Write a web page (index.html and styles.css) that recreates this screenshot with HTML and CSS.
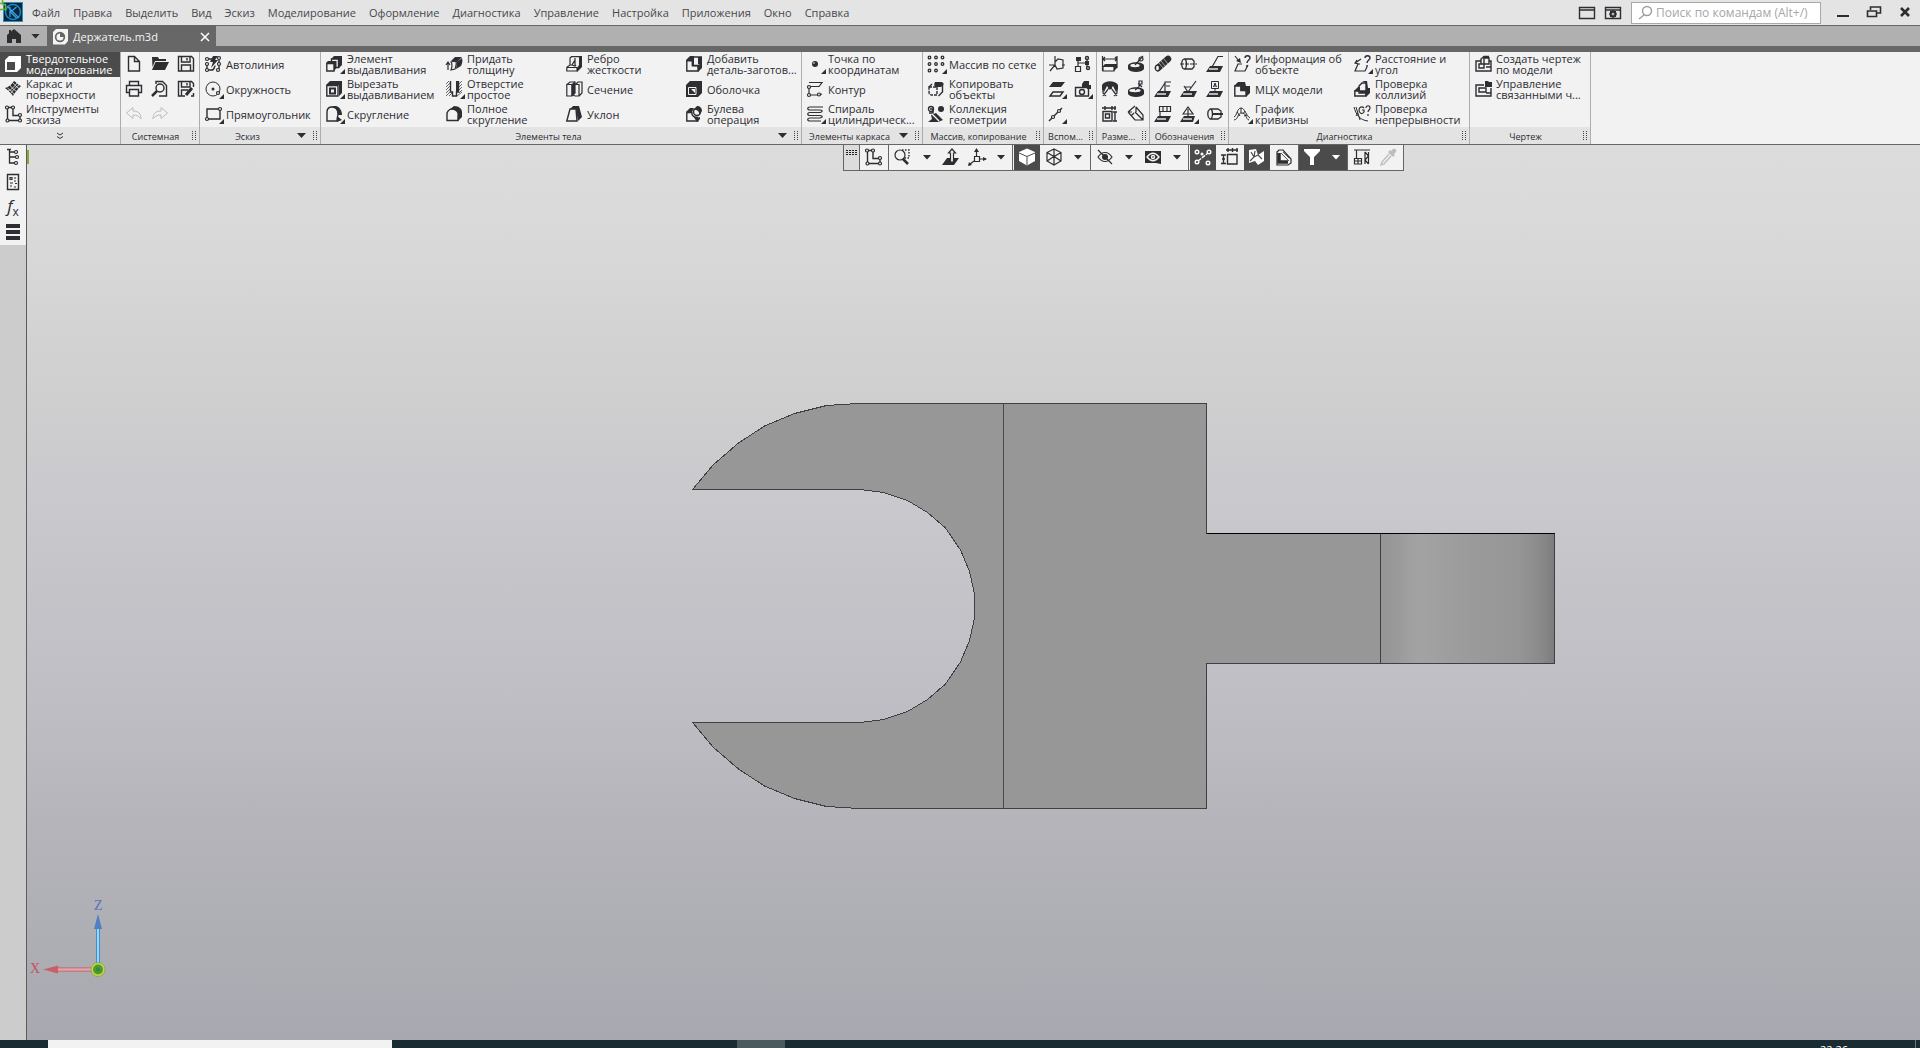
FILE: index.html
```html
<!DOCTYPE html>
<html lang="ru">
<head>
<meta charset="utf-8">
<title>Держатель.m3d</title>
<meta name="viewport" content="width=device-width, initial-scale=1">
<link rel="stylesheet" href="styles.css">
</head>
<body>
<header class="titlebar">
  <svg class="logo" viewBox="0 0 26 25" aria-hidden="true"><rect x="3.500" y="2.500" width="19" height="19" fill="#0a2540" stroke="#2497b8"/><circle cx="13" cy="12" r="7.500" fill="none" stroke="#1e86c4" stroke-width="1.500"/><path d="M10 7v10M16.500 7l-6 5 6 6M7 6l12 12" fill="none" stroke="#39a7dc" stroke-width="1.200"/><path d="M0 3.500h2.500V0M0 9.500h5.500V4.500H2.500" fill="none" stroke="#6fae2c" stroke-width="1.500"/></svg>
  <nav class="menu" aria-label="Главное меню">
    <button>Файл</button><button>Правка</button><button>Выделить</button><button>Вид</button><button>Эскиз</button><button>Моделирование</button><button>Оформление</button><button>Диагностика</button><button>Управление</button><button>Настройка</button><button>Приложения</button><button>Окно</button><button>Справка</button>
  </nav>
  <button class="win" aria-label="Окно"><svg class="icon" viewBox="0 0 20 20"><path d="M2.500 4.500h15v11h-15zM2 7h16"/></svg></button>
  <button class="win" aria-label="Параметры"><svg class="icon" viewBox="0 0 20 20"><path d="M2.500 4.500h15v11h-15zM2 7h16"/><circle cx="10" cy="11" r="2.500" stroke-width="2"/><path d="M10 7v8M6 11h8M7 8l6 6M13 8l-6 6" stroke-width="1"/><circle class="p" cx="10" cy="11" r="1"/></svg></button>
  <label class="search"><svg class="icon" viewBox="0 0 20 20"><circle cx="11" cy="8" r="4.500"/><path d="M8 12l-5 4"/></svg><input type="text" placeholder="Поиск по командам (Alt+/)" aria-label="Поиск по командам"></label>
  <div class="winctl">
    <button aria-label="Свернуть"><svg class="icon" viewBox="0 0 20 20"><path d="M4 14h12" stroke-width="2"/></svg></button>
    <button aria-label="Развернуть"><svg class="icon" viewBox="0 0 20 20"><path d="M3.500 9h9v5.500h-9zM3 9h10M6.500 8V5h10v6H13M6 5h11" stroke-width="1.600"/></svg></button>
    <button aria-label="Закрыть"><svg class="icon" viewBox="0 0 20 20"><path d="M6 6l8 8M14 6l-8 8" stroke-width="2.500"/></svg></button>
  </div>
</header>

<div class="tabs">
  <button class="home" aria-label="Начальная страница"><svg class="icon" viewBox="0 0 20 20"><path class="f" d="M10 3l7 6v8h-5v-4H8v4H3V9zM5 4h2v4H5z"/></svg><i class="caret"></i></button>
  <div class="tab"><svg class="icon" viewBox="0 0 20 20"><path class="f" d="M5 2h12v12l-3 3.500H2V5z"/><circle cx="9" cy="10" r="4.500" stroke="#676767" fill="#676767"/><path class="f" d="M9 6.500a3.500 3.500 0 1 0 3.500 3.500H9z"/></svg><span>Держатель.m3d</span><button aria-label="Закрыть вкладку"><svg viewBox="0 0 10 10"><path d="M1 1l8 8M9 1L1 9"/></svg></button></div>
</div>

<div class="ribbon">
  <section class="group">
    <div class="cmds">
      <button class="cmd on"><svg class="icon" viewBox="0 0 20 20"><path class="f" d="M1 6l4-4h12v12l-4 4H1z"/><path fill="#4b4b4b" stroke="none" d="M3 8h8v8H3z"/></svg><span>Твердотельное<br>моделирование</span></button>
      <button class="cmd"><svg class="icon" viewBox="0 0 20 20"><path class="f" d="M1 9c4-1 7-4 9-7 2 1 4 4 7 5-3 3-6 6-8 10-2-3-5-6-8-8z"/><path d="M4 12c3-1 6-4 9-8M7 14c2-3 5-6 8-8M6 6c1 3 5 5 7 7M3.500 9c2 2 6 4 7 7M9 4c2 2 4 5 7 6" stroke="#f2f2f2" stroke-width=".8"/></svg><span>Каркас и<br>поверхности</span></button>
      <button class="cmd"><svg class="icon" viewBox="0 0 20 20"><path d="M3.500 4v12.500H16V11.500H9V3.500H4"/><g class="n"><circle cx="3" cy="3.500" r="1.500"/><circle cx="9" cy="3.500" r="1.500"/><circle cx="16" cy="11" r="1.500"/><circle cx="16" cy="16.500" r="1.500"/><circle cx="3.500" cy="16.500" r="1.500"/></g></svg><span>Инструменты<br>эскиза</span></button>
    </div>
    <button class="foot more" aria-label="Ещё"><svg viewBox="0 0 8 8"><path d="M1 1l3 2 3-2M1 4.500l3 2 3-2"/></svg></button>
  </section>

  <section class="group">
    <div class="grid g3">
      <button aria-label="Создать"><svg class="icon" viewBox="0 0 20 20"><path d="M4.500 2.500h6l5 5v9.500h-11zM10.500 2.500v5h5"/></svg></button>
      <button aria-label="Открыть"><svg class="icon" viewBox="0 0 20 20"><path class="f" d="M2 3h6l1 2h7v2H5L2.500 13zM5.500 8H19l-4 8H2z"/></svg></button>
      <button aria-label="Сохранить"><svg class="icon" viewBox="0 0 20 20"><path d="M2.500 2.500h13l2 2v12.500h-15zM5.500 3v5h8.500V3M5.500 17v-6h9v6M11 4v2.500"/></svg></button>
      <button aria-label="Печать"><svg class="icon" viewBox="0 0 20 20"><path d="M5.500 6V2.500h9V6M5 13.500H2.500V6.500h15v7H15M5.500 10.500h9v6.500h-9zM5 10.500h10"/></svg></button>
      <button aria-label="Просмотр"><svg class="icon" viewBox="0 0 20 20"><path d="M6 5V2.500h6.500l4 4V17H9"/><circle cx="10" cy="9" r="4"/><path d="M7 12l-5 5" stroke-width="2.500"/></svg></button>
      <button aria-label="Сохранить как"><svg class="icon" viewBox="0 0 20 20"><path d="M9 17H2.500V2.500h13l2 2V8M5.500 3v5h8.500V3M5.500 17v-6h7M11 4v2.500M17.500 14v3H15"/><path d="M10 16l6-7" stroke-width="3"/></svg></button>
      <button disabled aria-label="Отменить"><svg class="icon thin" viewBox="0 0 20 20"><path d="M2.500 9L9 3.500v3.500c6 0 8 3 8 8-2-3-4-4-8-4v3.500z"/></svg></button>
      <button disabled aria-label="Повторить"><svg class="icon thin" viewBox="0 0 20 20"><path d="M17.500 9L11 3.500v3.500c-6 0-8 3-8 8 2-3 4-4 8-4v3.500z"/></svg></button>
    </div>
    <footer class="foot"><span>Системная</span><i class="grip"></i></footer>
  </section>

  <section class="group">
    <div class="cmds">
      <button class="cmd"><svg class="icon" viewBox="0 0 20 20"><path d="M3 15V9M3.500 16h4c4 0 2-4 4-4M4 5h4M15 4v12"/><path class="f" d="M9 2h5l-3 4h3l-7 8 2-6H6z"/><g class="n"><circle cx="3" cy="5" r="1.500"/><circle cx="3" cy="10" r="1.500"/><circle cx="3" cy="16" r="1.500"/><circle cx="15" cy="4" r="1.500"/><circle cx="15" cy="10" r="1.500"/><circle cx="14" cy="16" r="1.500"/></g></svg><span>Автолиния</span></button>
      <button class="cmd"><svg class="icon" viewBox="0 0 20 20"><circle cx="9" cy="10" r="7" stroke-width="1"/><circle class="f" cx="9" cy="10" r="1.500"/><circle class="n1" cx="14" cy="14" r="1.500"/><path class="f" d="M20 15v5h-5z"/></svg><span>Окружность</span></button>
      <button class="cmd"><svg class="icon" viewBox="0 0 20 20"><path d="M3 5h13v10H3z"/><g class="n"><circle cx="16" cy="5" r="1.500"/><circle cx="3" cy="15" r="1.500"/></g><path class="f" d="M20 15v5h-5z"/></svg><span>Прямоугольник</span></button>
    </div>
    <footer class="foot"><span>Эскиз</span><i class="caret"></i><i class="grip"></i></footer>
  </section>

  <section class="group">
    <div class="cmds">
      <button class="cmd"><svg class="icon" viewBox="0 0 20 20"><path d="M6.500 8V5h7v8.500H11M1.800 9.500H9V17H1.800z"/><path class="f" d="M6 5l3-3h8v9l-3 3V5z"/><path class="f" d="M1 9l2-2h8.500v7L9 17V9z"/><path class="f" d="M20 15v5h-5z"/></svg><span>Элемент<br>выдавливания</span></button>
      <button class="cmd"><svg class="icon" viewBox="0 0 20 20"><path class="f" d="M1 6l4-4h12v12l-3 3V6z"/><path d="M1.800 6.500H13V17H1.800z"/><path d="M5 9.500h5v5H5z" stroke-width="2"/><path class="f" d="M20 15v5h-5z"/></svg><span>Вырезать<br>выдавливанием</span></button>
      <button class="cmd"><svg class="icon" viewBox="0 0 20 20"><path d="M2 17V8c0-4 3-5 5-5 5 0 6 4 6 7 0 2-1 3-1 7z"/><path class="f" d="M6 2h5c4 1 6 5 6 9l-4 0c0-4-2-8-7-9zM12 12l5 4-5 2z"/><path class="f" d="M20 15v5h-5z"/></svg><span>Скругление</span></button>
      <button class="cmd"><svg class="icon" viewBox="0 0 20 20"><path d="M3 16V9M1 11l2-3 2 3M6 8l5-1c1 3 0 5-1 8l-4 1c1-3 2-5 0-8z" stroke-width="1.200"/><path class="f" d="M6 7l4-4h7l-5 5zM12 8l5-4c1 3 0 6-1 8l-5 3z"/></svg><span>Придать<br>толщину</span></button>
      <button class="cmd"><svg class="icon" viewBox="0 0 20 20"><path d="M5.500 2v11h2v4h4v-4h2V2"/><path d="M1 5l3-3M1 8l4-4M1 11l4-4M1 14l4-4M1 17l4-4M4 17l3-3M14 5l3-3M14 8l3-3M14 11l3-3M14 14l3-3M12 17l5-4" stroke-width=".7"/><path class="f" d="M11 2h3v11h-3z M20 15v5h-5z"/></svg><span>Отверстие<br>простое</span></button>
      <button class="cmd"><svg class="icon" viewBox="0 0 20 20"><path d="M2 16.500V9c1-3 4-5 8-4 3 1 4 4 3 7v4.500z"/><path class="f" d="M4 6l5-4c5 0 8 3 8 6v5l-4 4v-5c0-4-3-7-9-6z"/></svg><span>Полное<br>скругление</span></button>
      <button class="cmd"><svg class="icon" viewBox="0 0 20 20"><path d="M5 11V4l1.500-1.300H16v9.300l-3 2M1.800 13.500H12V17H1.800zM2 13l3-2h2M10 4v8M10 6l-3 5 3 1 1-1" stroke-width="1.200"/><path class="f" d="M14 2h3v11l-5 5v-4l2-3z"/></svg><span>Ребро<br>жесткости</span></button>
      <button class="cmd"><svg class="icon" viewBox="0 0 20 20"><path d="M1.800 5.500h5V17h-5zM7 17l3-3V3H5L2 5.500M10 5.500h4V17h-4l-2-1M11 5l2-2h4v11l-3 3" stroke-width="1.200"/><path class="f" d="M7 5l3-3v12l-3 3z"/></svg><span>Сечение</span></button>
      <button class="cmd"><svg class="icon" viewBox="0 0 20 20"><path d="M1.800 17L5 5h6l1 12z"/><path class="f" d="M5 5l3-3h6l3 11-4 4L11 5z"/></svg><span>Уклон</span></button>
      <button class="cmd"><svg class="icon" viewBox="0 0 20 20"><path d="M1.800 6.800h5.500v5H13V17H1.800z"/><path class="f" d="M1 6l4-4h4v10H7V7H1zM9 11h8v3l-4 4v-6H9z"/><path d="M9 3h7.300v8.500H9"/><path class="f" d="M13 3h4v9l-4-2z"/></svg><span>Добавить<br>деталь-заготов...</span></button>
      <button class="cmd"><svg class="icon" viewBox="0 0 20 20"><path class="f" d="M1 6l4-4h12v12l-4 4H1z"/><path d="M3.500 8.500h7.500v7H3.500z" stroke="#f2f2f2" stroke-width="1"/><path d="M6 10h4v4z" fill="#f2f2f2" stroke="none"/></svg><span>Оболочка</span></button>
      <button class="cmd"><svg class="icon" viewBox="0 0 20 20"><path d="M1.800 8.500h5c0 3 2 5 6 5V17h-11z"/><path class="f" d="M1 8l4-4h4l-2 4zM8 12l5 2 2-1v2l-3 3z"/><circle cx="12" cy="8" r="3.500"/><path class="f" d="M8 6l4-4c3 0 5 2 5 5l-3 4c1-3-2-6-6-5z"/></svg><span>Булева<br>операция</span></button>
    </div>
    <footer class="foot"><span>Элементы тела</span><i class="caret"></i><i class="grip"></i></footer>
  </section>

  <section class="group">
    <div class="cmds">
      <button class="cmd"><svg class="icon" viewBox="0 0 20 20"><circle class="f" cx="9" cy="10" r="3"/><circle cx="8" cy="9" r="1" fill="#aaa" stroke="none"/><path class="f" d="M20 15v5h-5z"/></svg><span>Точка по<br>координатам</span></button>
      <button class="cmd"><svg class="icon" viewBox="0 0 20 20"><path d="M3 3.500h13l-3 4H4L3 8v8h10l3-1" stroke-width="1.200"/><g class="n"><circle cx="3" cy="8" r="1.500"/><circle cx="3" cy="16" r="1.500"/><circle cx="13" cy="15.500" r="1.500"/></g></svg><span>Контур</span></button>
      <button class="cmd"><svg class="icon" viewBox="0 0 20 20"><path d="M17 3H4c-3 0-3 3 0 3h10c3 0 3 2 0 2.500H4c-3 0-3 3 0 3h10c3 0 3 2 0 2.500H4c-3 0-3 3 0 3h11" stroke-width="1.200"/><path class="f" d="M20 15v5h-5z"/></svg><span>Спираль<br>цилиндрическ...</span></button>
    </div>
    <footer class="foot"><span>Элементы каркаса</span><i class="caret"></i><i class="grip"></i></footer>
  </section>

  <section class="group">
    <div class="cmds">
      <button class="cmd"><svg class="icon" viewBox="0 0 20 20"><g stroke-width="1.300"><circle cx="2.500" cy="3.500" r="1.300"/><circle cx="9" cy="3.500" r="1.300"/><circle cx="15.500" cy="3.500" r="1.300"/><circle cx="2.500" cy="10" r="1.300"/><circle cx="9" cy="10" r="1.300"/><circle cx="15.500" cy="10" r="1.300"/><circle cx="2.500" cy="16.500" r="1.300"/><circle cx="9" cy="16.500" r="1.300"/></g><path class="f" d="M20 15v5h-5z"/></svg><span>Массив по сетке</span></button>
      <button class="cmd"><svg class="icon" viewBox="0 0 20 20"><path d="M2 8h8v8H5c-2 0-3-1-3-3z" stroke-dasharray="3 1"/><path d="M15.500 6v7l-4 4M5 5l-3 3"/><path class="f" d="M8 3h7l2 2-3 3H8c-1-2-1-3 0-5z"/></svg><span>Копировать<br>объекты</span></button>
      <button class="cmd"><svg class="icon" viewBox="0 0 20 20"><circle cx="4" cy="5" r="2.500"/><path d="M3 5h3v4H2"/><circle class="f" cx="14" cy="5" r="3"/><path class="f" d="M4 11l5-2 7 7-5 2H1l4-3z"/><path d="M5 10l7 7" stroke="#f2f2f2"/></svg><span>Коллекция<br>геометрии</span></button>
    </div>
    <footer class="foot"><span>Массив, копирование</span><i class="grip"></i></footer>
  </section>

  <section class="group">
    <div class="grid g2">
      <button aria-label="Система координат"><svg class="icon" viewBox="0 0 20 20"><path d="M8 2v9H2M8 11l-5 6M8 11l2 4 6-1V6l-5-1-3 3M15 11h3" stroke-width="1.200"/></svg></button>
      <button aria-label="Связи"><svg class="icon" viewBox="0 0 20 20"><path d="M2.500 12.500h5v5h-5zM5 12V6M5 9h9M14 5v8" stroke-width="1.200"/><path class="f" d="M3 3h5v4H3zM12 7h4v4h-4z"/><circle cx="14" cy="4" r="1.500"/><circle cx="15" cy="14" r="1.500"/></svg></button>
      <button aria-label="Плоскость"><svg class="icon" viewBox="0 0 20 20"><path class="f" d="M6 3h12l-4 5H2z"/><path d="M6 13h10l-3 4H3z"/><path class="f" d="M20 15v5h-5z"/></svg></button>
      <button aria-label="Объекты"><svg class="icon" viewBox="0 0 20 20"><path d="M2.500 8.500h13v8.500h-13z"/><circle cx="9" cy="13" r="2.500"/><path class="f" d="M11 2h5v4h2v4h-4V8h-5V5z"/><path class="f" d="M20 15v5h-5z"/></svg></button>
      <button aria-label="Ось"><svg class="icon" viewBox="0 0 20 20"><path d="M2 17L15 4"/><g class="n"><circle cx="6" cy="13" r="1.500"/><circle cx="12" cy="7" r="1.500"/></g><path class="f" d="M20 15v5h-5z"/></svg></button>
    </div>
    <footer class="foot"><span>Вспом...</span><i class="grip"></i></footer>
  </section>

  <section class="group">
    <div class="grid g2">
      <button aria-label="Размер"><svg class="icon" viewBox="0 0 20 20"><path d="M2.500 2v15M17 2v12M3 5h14M5 3L3 5l2 2M15 3l2 2-2 2M3 12.500h11V17H3z" stroke-width="1.200"/><path class="f" d="M3 12l2-2h12v4l-3 3v-5z"/></svg></button>
      <button aria-label="Диаметр"><svg class="icon" viewBox="0 0 20 20"><path class="f" d="M2 12c0-5 16-5 16 0v3c-2 4-14 4-16 0z"/><ellipse cx="9" cy="11.500" rx="4" ry="1" fill="#f2f2f2" stroke="#f2f2f2"/><path d="M9 11l8-9" stroke-width="1.200"/><circle cx="15" cy="5" r="2" stroke-width="1.200"/></svg></button>
      <button aria-label="Угол"><svg class="icon" viewBox="0 0 20 20"><path class="f" d="M2 6c3-5 13-5 16 0v4l-2 3-3-6-3 4-3-4-3 6-2-3z"/><path d="M3 17c3-5 6-6 7-11 1 5 4 6 7 11M3 8v6l3 3M17 8v6l-3 3" stroke-width="1.200"/></svg></button>
      <button aria-label="Радиус"><svg class="icon" viewBox="0 0 20 20"><path class="f" d="M2 12c0-5 16-5 16 0v3c-2 4-14 4-16 0z"/><ellipse cx="9" cy="11.500" rx="5" ry="1" fill="#f2f2f2" stroke="#f2f2f2"/><path d="M9 11l4-3M13 8V2h3v3h-3l3 3" stroke-width="1.200"/></svg></button>
      <button aria-label="Авторазмер"><svg class="icon" viewBox="0 0 20 20"><path d="M2 4h14M5 2v4M12 2v4M3 7.500h9V17H3zM5.500 10h4v4h-4zM13 8h4M13 17h4M15 8v9M15 2v4" stroke-width="1.400"/></svg></button>
      <button aria-label="Линейный"><svg class="icon" viewBox="0 0 20 20"><path d="M2 8l7 8h8v-5l-7-8M2 8l7-6M9 8l8 8M2 8h4M5 12l3-3M10 3v5" stroke-width="1.200"/></svg></button>
    </div>
    <footer class="foot"><span>Разме...</span><i class="grip"></i></footer>
  </section>

  <section class="group">
    <div class="grid g3">
      <button aria-label="Резьба"><svg class="icon" viewBox="0 0 20 20"><path d="M5 14L15 5" stroke-width="6.500" stroke-linecap="round"/><path d="M6 9l5 6M8 7l5 6M11 5l4 5" stroke="#f2f2f2" stroke-width=".6"/><ellipse cx="4.500" cy="14" rx="2" ry="2.800" fill="#f2f2f2" stroke-width="1.200"/></svg></button>
      <button aria-label="Обозначение"><svg class="icon" viewBox="0 0 20 20"><path d="M5 5h8l2 2v6l-2 2H5C2 14 2 6 5 5zM6 5c2 2 2 8 0 10" stroke-width="1.300"/><path d="M1 10h17" stroke-width="1" stroke-dasharray="4 1"/></svg></button>
      <button aria-label="Выноска"><svg class="icon" viewBox="0 0 20 20"><path d="M18 2.500h-5L7 13" stroke-width="1.200"/><path class="f" d="M5 12h13l-3 6H1z"/><path d="M4 15h9" stroke="#f2f2f2"/></svg></button>
      <button aria-label="Маркировка"><svg class="icon" viewBox="0 0 20 20"><path d="M18 3h-6v9M13 7h4M12 4L6 13" stroke-width="1.200"/><path class="f" d="M5 12h13l-3 6H1z"/><path d="M4 15h9" stroke="#f2f2f2"/></svg></button>
      <button aria-label="Шероховатость"><svg class="icon" viewBox="0 0 20 20"><path d="M5 7l4 6 8-11M6 8h6" stroke-width="1.200"/><path class="f" d="M5 12h13l-3 6H1z"/><path d="M4 15h9" stroke="#f2f2f2"/></svg></button>
      <button aria-label="База"><svg class="icon" viewBox="0 0 20 20"><path d="M6.500 2.500h7v7h-7zM10 9v4M8.500 8l1.500-4 1.500 4M9 7h2" stroke-width="1"/><path class="f" d="M5 12h13l-3 6H1z"/><path d="M4 15h9" stroke="#f2f2f2"/></svg></button>
      <button aria-label="Допуск"><svg class="icon" viewBox="0 0 20 20"><path d="M6.500 2.500h11v5h-11zM10 3v4M14 3v4M7 8v6" stroke-width="1.200"/><path class="f" d="M5 12h13l-3 6H1z"/><path d="M4 15h9" stroke="#f2f2f2"/></svg></button>
      <button aria-label="Клеймо"><svg class="icon" viewBox="0 0 20 20"><path d="M4 10l5-7 5 7zM9 5v8" stroke-width="1.200"/><path class="f" d="M5 12h11l-2 6H1z"/><path d="M4 15h9" stroke="#f2f2f2"/><path class="f" d="M20 15v5h-5z"/></svg></button>
      <button aria-label="Осевая линия"><svg class="icon" viewBox="0 0 20 20"><path d="M5 5h8l3 2v6l-3 2H5C2 13 2 7 5 5zM6 5c2 2 2 8 0 10" stroke-width="1.300"/><path d="M8 10h10" stroke-width="2"/></svg></button>
    </div>
    <footer class="foot"><span>Обозначения</span><i class="grip"></i></footer>
  </section>

  <section class="group">
    <div class="cmds">
      <button class="cmd"><svg class="icon" viewBox="0 0 20 20"><path d="M9 10H5l-3 7h10l3-6" stroke-width="1.200"/><path d="M2 2l4 5" stroke-width="1.200"/><path class="f" d="M8 9L3 7l4-3z"/><path d="M12 4c0-3 5-3 5 0 0 2-3 2-3 5M14 11v2"/></svg><span>Информация об<br>объекте</span></button>
      <button class="cmd"><svg class="icon" viewBox="0 0 20 20"><path d="M1.800 7h6v4.500H13V17H1.800z"/><path class="f" d="M1 7l4-4h7l1 4h4v7l-4 4v-7H8V7z"/></svg><span>МЦХ модели</span></button>
      <button class="cmd"><svg class="icon" viewBox="0 0 20 20"><path d="M1 16c5-1 3-7 8-7s3 6 7 7M1 13C4 12 4 4 8 4s5 8 9 10M4 8l3 4M8 4v5M12 7l-2 3M14 11l-3 1" stroke-width="1"/><path class="f" d="M20 15v5h-5z"/></svg><span>График<br>кривизны</span></button>
      <button class="cmd"><svg class="icon" viewBox="0 0 20 20"><path d="M2 9l6-4M7 10H5l-3 7h10l2-4M4 6l-2 3 4 1" stroke-width="1.200"/><path d="M12 4c0-3 5-3 5 0 0 2-3 2-3 5M14 11v2"/><path class="f" d="M20 15v5h-5z"/></svg><span>Расстояние и<br>угол</span></button>
      <button class="cmd"><svg class="icon" viewBox="0 0 20 20"><path d="M1.800 12h11v5h-11zM6 14V7l3-3h4v10z"/><path class="f" d="M1 12l4-4h2v6h6V4L9 2h5l1 7h2v5l-4 4v-6z"/></svg><span>Проверка<br>коллизий</span></button>
      <button class="cmd"><svg class="icon" viewBox="0 0 20 20"><path d="M1 3c2 7 5 13 14 14M3 12l2-3M3 3l4 13" stroke-width="1"/><path d="M11 4c-2-2-5-1-5 2s3 5 5 2V6H9M13 4c0-3 4-3 4 0 0 2-2 2-2 4M15 10v2" stroke-width="1.200"/></svg><span>Проверка<br>непрерывности</span></button>
    </div>
    <footer class="foot"><span>Диагностика</span><i class="grip"></i></footer>
  </section>

  <section class="group">
    <div class="cmds">
      <button class="cmd"><svg class="icon" viewBox="0 0 20 20"><path d="M7 7H2v10h15V7h-2M5 10h5v4H5zM12 13h5M10 4h5v6h-5zM7 10V5l3-2.500h5"/></svg><span>Создать чертеж<br>по модели</span></button>
      <button class="cmd"><svg class="icon" viewBox="0 0 20 20"><path d="M10 6H2v11h15V9M5 9h7v4H5zM12 14h5"/><path class="f" d="M11 2h3l1 1h3v5h-7z"/></svg><span>Управление<br>связанными ч...</span></button>
    </div>
    <footer class="foot"><span>Чертеж</span><i class="grip"></i></footer>
  </section>
</div>

<main class="work">
  <aside class="side">
    <button aria-label="Дерево"><svg class="icon" viewBox="0 0 20 20"><path d="M4 2.500h4M6.500 2v14h7M6 10h7M6 5h5" stroke-width="1.300"/><g class="n"><circle cx="13" cy="5" r="1.500"/><circle cx="14" cy="10" r="1.500"/><circle cx="13" cy="16" r="1.500"/></g></svg></button>
    <button aria-label="Параметры"><svg class="icon" viewBox="0 0 20 20"><path d="M4.500 2.500h11v15h-11z"/><path d="M7 5.500h2v2H7zM7 14h2M7 11h3M11 6h2M11 9h2M12 11.500h2M11 15h2" stroke-width="1.200"/></svg></button>
    <button aria-label="Переменные"><span class="fx">f<sub>x</sub></span></button>
    <button aria-label="Главный раздел"><svg class="icon" viewBox="0 0 20 20"><path class="f" d="M3 2h14v4H3zM3 8h14v4H3zM3 14h14v4H3z"/></svg></button>
  </aside>

  <div class="view">
    <svg class="model" viewBox="27 145 1893 895" role="img" aria-label="Модель">
      <defs><linearGradient id="cyl"><stop offset="0" stop-color="#959595"/><stop offset=".08" stop-color="#999"/><stop offset=".22" stop-color="#a3a3a3"/><stop offset=".5" stop-color="#9b9b9b"/><stop offset=".8" stop-color="#959595"/><stop offset=".92" stop-color="#8a8a8a"/><stop offset="1" stop-color="#7c7c7c"/></linearGradient></defs>
      <path fill="#979797" stroke="#3f3f42" d="M692.500 489.500L713.500 464.500 738.500 443 764.500 426 794.500 413.500 826.500 405.500 858.500 403.500H1206.500V533.500H1554.500V663.500H1206.500V808.500H858.500L826.500 806.500 794.500 798.500 764.500 786 738.500 769 713.500 747.500 692.500 722.500H860.500L883.500 719.500 907.500 711.500 927.500 699.500 945.500 684 960.500 662 969.500 640.500 974.500 618V594L969.500 571.500 960.500 550 945.500 528 927.500 512.500 907.500 500.500 883.500 492.500 860.500 489.500Z"/>
      <path fill="url(#cyl)" stroke="#3f3f42" d="M1380.500 533.500h174v130h-174z"/>
      <path fill="none" stroke="#4a4a4a" d="M1003.500 403.500V808.500"/>
      <path fill="none" stroke="#000" d="M1206.500 533.500H1554.500"/>
    </svg>

    <i class="mark"></i>

    <div class="float" role="toolbar" aria-label="Вид">
      <div class="fg handle"><svg viewBox="0 0 12 6"><path d="M0 .5h12M0 2.500h12M0 4.500h12"/></svg></div>
      <div class="fg spaced"><button aria-label="Эскиз"><svg class="icon" viewBox="0 0 20 20"><path d="M3.500 4v12.500H16V11.500H9V3.500H4"/><g class="n"><circle cx="3" cy="3.500" r="1.500"/><circle cx="9" cy="3.500" r="1.500"/><circle cx="16" cy="11" r="1.500"/><circle cx="16" cy="16.500" r="1.500"/><circle cx="3.500" cy="16.500" r="1.500"/></g></svg></button></div>
      <div class="fg">
        <button aria-label="Масштаб"><svg class="icon" viewBox="0 0 20 20"><circle cx="7" cy="8" r="5" stroke-width="1.200"/><path d="M10 12l5 5" stroke-width="2.500"/><path d="M9 3h7v8h-6" stroke-dasharray="1.500 1.500"/></svg></button><button class="dd" aria-label="Список"><i class="caret"></i></button><button aria-label="Нормально к"><svg class="icon" viewBox="0 0 20 20"><path class="f" d="M6 11h12l-5 7H1z"/><path d="M9.500 15V6h-2L11 2l3.500 4h-2v9z" fill="#f2f2f2" stroke-width="1.200"/></svg></button><button aria-label="Ориентация"><svg class="icon" viewBox="0 0 20 20"><path d="M7.500 9.500h5v5h-5zM9.500 9V3M13 12h6M7 14l-5 4" stroke-width="1.200"/><path class="f" d="M9.500 1l2.500 4H7zM20 12l-4-2v4zM1 19l1-4 3 3z"/></svg></button><button class="dd" aria-label="Список"><i class="caret"></i></button>
      </div>
      <div class="fg spaced">
        <button class="on" aria-label="Полутоновое"><svg class="icon" viewBox="0 0 20 20"><path class="f" d="M10 1.500l8 3.500v9l-8 4.500L2 14V5z"/><path d="M2 6l8 3.500L18 6M10 9.500V18" stroke="#4b4b4b" stroke-width="1"/></svg></button><div class="split"><button aria-label="Каркас"><svg class="icon" viewBox="0 0 20 20"><path d="M10 2l7 3.500v8.500l-7 4-7-4V5.500zM3 5.500l7 4 7-4M10 9.500V18M10 2v7M3 14l7-4.500 7 4.500" stroke-width="1.200"/></svg></button><button class="dd" aria-label="Список"><i class="caret"></i></button></div>
      </div>
      <div class="fg">
        <button aria-label="Скрыть"><svg class="icon" viewBox="0 0 20 20"><path d="M3 10c4-6 10-6 14 0-4 6-10 6-14 0zM3 3l14 14" stroke-width="1.200"/><circle class="f" cx="10" cy="10" r="3"/></svg></button><button class="dd" aria-label="Список"><i class="caret"></i></button><button aria-label="Показать"><svg class="icon" viewBox="0 0 20 20"><path class="f" d="M2 4h16v13l-5-1H2z"/><path d="M4 10c4-5 8-5 12 0-4 5-8 5-12 0z" stroke="#f2f2f2"/><circle cx="10" cy="10" r="1.500" stroke="#f2f2f2"/></svg></button><button class="dd" aria-label="Список"><i class="caret"></i></button>
      </div>
      <div class="fg spaced">
        <button class="on" aria-label="Точки"><svg class="icon" viewBox="0 0 20 20"><path d="M5 14L15 6" stroke-dasharray="4 1"/><circle cx="4" cy="5" r="1.800"/><circle cx="9" cy="7" r=".8"/><circle cx="16" cy="5" r="1.800" fill="#4b4b4b"/><circle cx="4" cy="15" r="1.800" fill="#4b4b4b"/><circle cx="15" cy="16" r="1.800"/></svg></button><button aria-label="Размеры"><svg class="icon" viewBox="0 0 20 20"><path d="M6 3h12M8 1v4M12.500 1v4M17 1v4M7.500 7.500h9.500V17H7.500zM1 8h5M1 16.500h5M3.500 8v8M2 12h3"/></svg></button><button class="on" aria-label="Тела"><svg class="icon" viewBox="0 0 20 20"><path class="f" d="M2 3l7-1 2 6 6-4v10l-6 4-3-4-6 2z"/><path d="M4 5l3 5-4 4M8 4l-1 6 4-2 4 4" stroke="#4b4b4b" stroke-width="1.200"/></svg></button><button aria-label="Сечение"><svg class="icon" viewBox="0 0 20 20"><path d="M3 5l2-2h4l8 9v4l-3 2H3z" stroke-width="1.200"/><path d="M7 6l8 8M9 5l6 6" stroke-width=".8"/><path d="M5 6v9h9" stroke-width="3.500"/></svg></button>
      </div>
      <div class="fg filter">
        <button class="on" aria-label="Фильтр"><svg class="icon" viewBox="0 0 20 20"><path class="f" d="M2 2h16v2l-6 6v8H8v-8L2 4z"/></svg></button><button class="dd on" aria-label="Список"><i class="caret"></i></button>
      </div>
      <div class="fg spaced">
        <button aria-label="Сборка"><svg class="icon" viewBox="0 0 20 20"><path d="M2 3h16M4.500 3v8M2.500 11.500h7V17h-7zM6 11v6M2.500 14h7M13 5v12M16.500 5v12M13 5l3.500 4-3.500 4 3.500 4" stroke-width="1.200"/></svg></button><button disabled aria-label="Пипетка"><svg class="icon" viewBox="0 0 20 20"><path class="f" d="M12 4l2-2c2-1 4 1 3 3l-2 2 1 1-2 2-5-5 2-2z"/><path d="M10 7l-7 8-1 3 3-1 7-8"/></svg></button>
      </div>
    </div>

    <svg class="triad" viewBox="0 0 80 80" aria-hidden="true">
      <path d="M52 65H14M52 68H14" stroke="#d0555c"/><path d="M14 66.500h38" stroke="#e5a5aa" stroke-width="2"/><path fill="#c96067" d="M0 66.500l15-4v8z"/>
      <path d="M53.500 60V24M56.500 60V24" stroke="#3f8fd0"/><path d="M55 60V24" stroke="#9cd6f2" stroke-width="2"/><path fill="#4f7fc4" d="M55 11l4 15h-8z"/>
      <circle cx="55" cy="66.500" r="6" fill="#4f9a2c" stroke="#c2d84a" stroke-width="2"/><circle cx="55" cy="66.500" r="7" fill="none" stroke="#8a9a3a" stroke-width=".7"/><circle cx="55" cy="66.500" r="2" fill="#2f8a4a"/>
    </svg>
    <span class="axis z">Z</span><span class="axis x">X</span>
  </div>
</main>

<footer class="taskbar"><div class="tsearch"></div><div class="tapp"></div><div class="tspace"></div><time>22:26</time><i class="peek"></i></footer>
</body>
</html>
```
FILE: styles.css
```css
* { box-sizing: border-box; }

body {
  margin: 0;
  height: 100vh;
  display: flex;
  flex-direction: column;
  overflow: hidden;
  background: #f2f2f2;
  color: #2d2d32;
  font: 11px/12px "Open Sans", "Noto Sans", sans-serif;
}

button {
  display: flex;
  align-items: center;
  justify-content: center;
  margin: 0;
  padding: 0;
  border: 0;
  background: none;
  color: inherit;
  font: inherit;
  text-align: left;
  white-space: nowrap;
}
button:disabled { color: #bdbdbd; }

.icon {
  flex: none;
  width: 20px;
  height: 20px;
  fill: none;
  stroke: currentColor;
  stroke-width: 1.4;
}
.icon.thin { stroke-width: 1; }
.icon .f { fill: currentColor; stroke: none; }
.icon .p { fill: #e4e4e4; stroke: none; }
.icon .n, .icon .n1 { fill: #f2f2f2; stroke-width: 1.2; }

.caret {
  flex: none;
  width: 9px;
  height: 5px;
  background: currentColor;
  clip-path: polygon(0 0, 100% 0, 50% 100%);
}

/* title bar */
.titlebar {
  flex: none;
  display: flex;
  align-items: center;
  height: 26px;
  border-bottom: 1px solid #666;
  background: #e4e4e4;
}
.logo { flex: none; width: 26px; height: 25px; }
.menu {
  display: flex;
  flex: 1;
  gap: 13px;
  padding: 1px 0 0 6px;
  color: #48484c;
}
.win { width: 26px; height: 25px; }
.search {
  display: flex;
  align-items: center;
  width: 190px;
  height: 22px;
  margin-left: 5px;
  padding-left: 4px;
  border: 1px solid #a8a8a8;
  background: #fff;
  color: #9c9c9c;
}
.search input {
  flex: 1;
  min-width: 0;
  padding: 0;
  border: 0;
  outline: 0;
  background: none;
  font: inherit;
  font-size: 12px;
  line-height: 20px;
}
.search input::placeholder { color: #a6a6a6; opacity: 1; }
.winctl { display: flex; margin-left: 6px; }
.winctl button { width: 31px; height: 25px; padding-bottom: 2px; }

/* document tabs */
.tabs {
  flex: none;
  display: flex;
  height: 26px;
  padding-left: 1px;
  border-bottom: 6px solid #676767;
  background: #b0b0b0;
}
.home { width: 46px; padding-right: 4px; gap: 7px; }
.tab {
  display: flex;
  align-items: center;
  width: 169px;
  padding: 1px 6px 0 4px;
  gap: 2px;
  background: #676767;
  color: #f4f4f4;
}
.tab span { flex: 1; padding-top: 1px; }
.tab svg:not(.icon) { width: 10px; height: 10px; fill: none; stroke: #fff; stroke-width: 1.5; }

/* ribbon */
.ribbon {
  flex: none;
  display: flex;
  border-bottom: 1px solid #666;
  background: #f2f2f2;
}
.group {
  display: flex;
  flex-direction: column;
  flex: none;
  border-right: 1px solid #adadad;
}
.cmds {
  display: grid;
  grid-auto-flow: column;
  grid-template-rows: repeat(3, 25px);
  grid-auto-columns: 120px;
}
.cmd {
  justify-content: flex-start;
  gap: 2px;
  padding: 0 0 1px 4px;
  line-height: 11px;
}
.on { background: #4b4b4b; color: #fff; }
.grid { display: grid; grid-template-rows: repeat(3, 25px); }
.grid button { padding-bottom: 1px; }
.g2 { grid-template-columns: repeat(2, 26px); }
.g3 { grid-template-columns: repeat(3, 26px); }
.foot {
  display: flex;
  align-items: center;
  width: 100%;
  height: 17px;
  padding-right: 3px;
  gap: 2px;
  background: #e3e3e3;
  font-size: 9px;
  line-height: 12px;
}
.foot.more { padding: 0; }
.foot span { flex: 1; padding-top: 2px; text-align: center; white-space: nowrap; }
.foot .caret { margin-right: 5px; }
.more svg { width: 8px; height: 8px; fill: none; stroke: #333; }
.grip {
  flex: none;
  width: 4px;
  height: 9px;
  background:
    linear-gradient(#444 50%, transparent 50%) left top / 1px 2px repeat-y,
    linear-gradient(#444 50%, transparent 50%) right top / 1px 2px repeat-y;
}

/* work area */
.work { flex: 1; display: flex; min-height: 0; }
.side {
  flex: none;
  width: 27px;
  border-right: 1px solid #5c5c5c;
  background: #ccc;
}
.side button { width: 26px; height: 25px; padding-bottom: 1px; background: #f2f2f2; }
.fx { font: italic 17px/20px "Open Sans", sans-serif; }
.fx sub { font-size: 12px; line-height: 1; font-style: normal; }
.view {
  position: relative;
  flex: 1;
  min-width: 0;
  overflow: hidden;
  background: linear-gradient(#dcdcdc, #dadada 8%, #cfcfd0 28%, #c9c8cd 40%, #bfbec4 62%, #b4b4ba 76%, #a8a8b0);
}
.model { display: block; width: 100%; height: 100%; shape-rendering: crispEdges; }
.mark { position: absolute; left: 0; top: 5px; width: 2px; height: 14px; background: #84a83c; }

/* floating view toolbar */
.float {
  position: absolute;
  left: 816px;
  top: -1px;
  display: flex;
  height: 27px;
  border: 1px solid #666;
  border-left: 0;
  background: #f2f2f2;
}
.fg { display: flex; padding-left: 1px; border-left: 1px solid #666; }
.fg.spaced { gap: 1px; padding-right: 1px; }
.split { display: flex; }
.fg button { width: 26px; height: 25px; padding-bottom: 1px; }
.fg .dd { width: 22px; }
.fg.filter { padding: 0; }
.fg.handle { width: 16px; padding: 5px 0 0 2px; background: #dcdcdc; }
.handle svg { width: 12px; height: 6px; stroke: #222; stroke-dasharray: 2 1; shape-rendering: crispEdges; }

/* axis triad */
.triad { position: absolute; left: 16px; bottom: 57px; width: 80px; height: 80px; }
.axis { position: absolute; font: 14px/14px "Liberation Serif", serif; }
.z { left: 67px; bottom: 127px; color: #5b73b8; }
.x { left: 3px; bottom: 64px; color: #c4525a; }

/* system taskbar */
.taskbar {
  flex: none;
  display: flex;
  height: 8px;
  padding-left: 48px;
  overflow: hidden;
  background: #1a2c31;
  color: #fff;
}
.tsearch { width: 344px; background: #f2f2f2; }
.tapp { width: 48px; margin-left: 345px; background: #4a5a5e; }
.tspace { flex: 1; }
.taskbar time { padding-top: 4px; }
.peek { width: 1px; margin: 0 4px 0 67px; background: #6b777a; }
```
